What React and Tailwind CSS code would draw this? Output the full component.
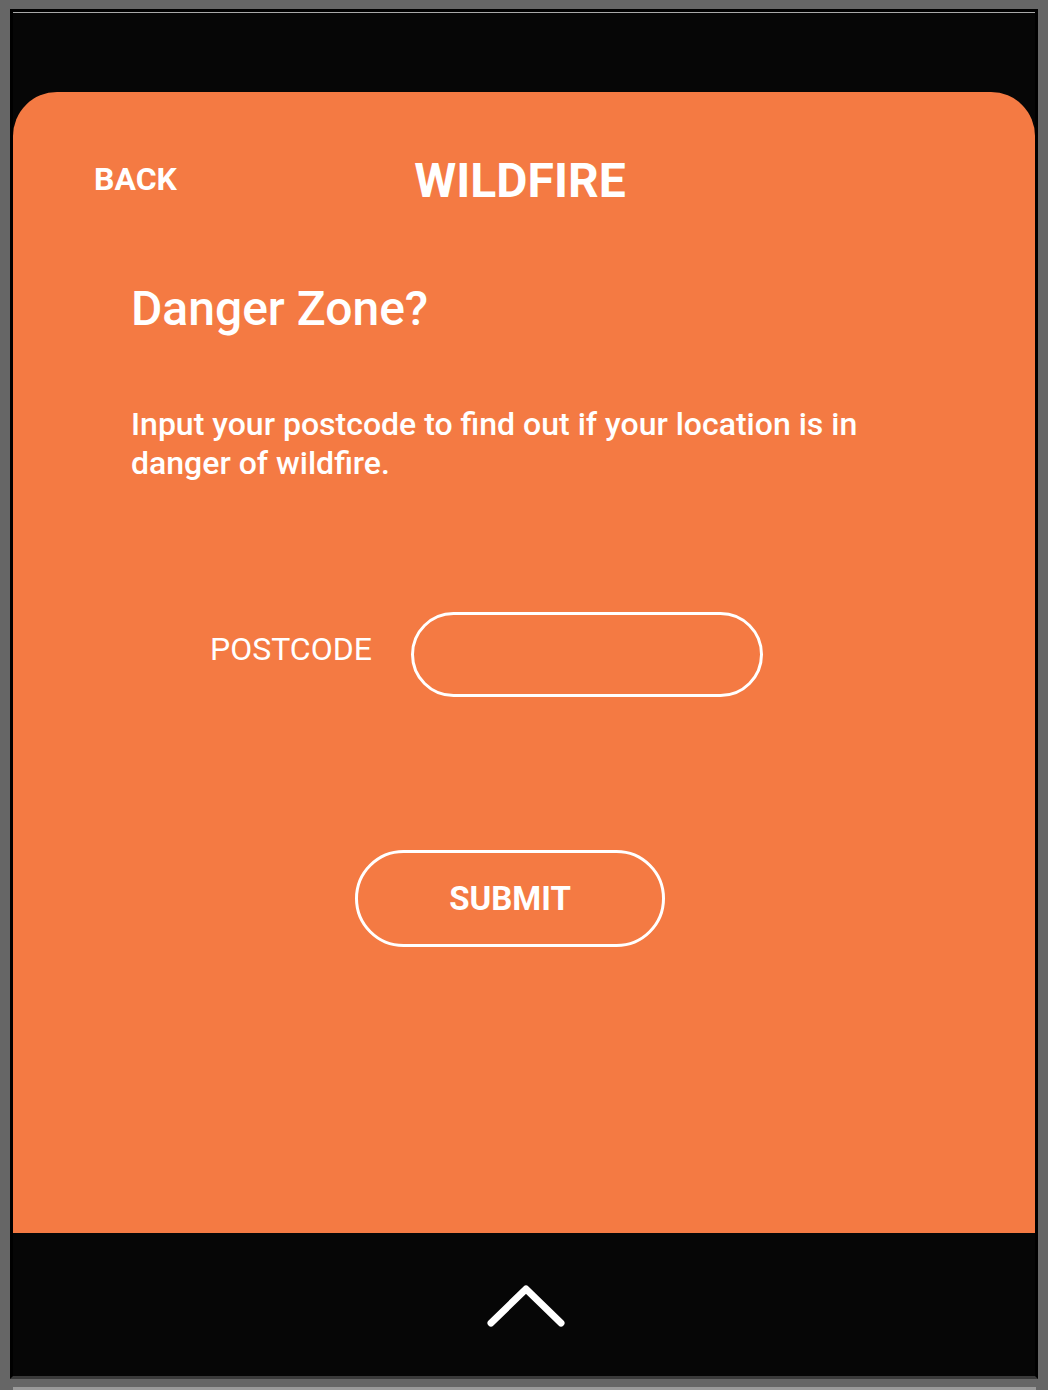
import React, { useState } from 'react';

const ChevronUp = () => (
  <svg width="84" height="50" viewBox="0 0 84 50" fill="none" stroke="white" strokeWidth="7" strokeLinecap="round" strokeLinejoin="round">
    <polyline points="7,42 42,8 77,42" />
  </svg>
);

const App = () => {
  const [postcode, setPostcode] = useState('');

  return (
    <div className="min-h-[1390px] w-[1048px] bg-[#666666] pt-[9px] overflow-hidden" style={{ fontFamily: 'Roboto, "Liberation Sans", sans-serif' }}>
      <div className="ml-[10px] w-[1028px] h-[1370px] border-[3px] border-b-[#3a3a3a] border-black bg-[#060606] flex flex-col">
        <div className="h-px bg-[#a8a8a8]" />
        <div className="h-[79px]" />

        <div className="h-[1141px] bg-[#f47a43] rounded-t-[44px] text-white flex flex-col pt-[67px]">
          <div className="grid grid-cols-[1fr_auto_1fr] items-start">
            <button className="justify-self-start ml-[81px] text-[32px] leading-[40px] font-bold">BACK</button>
            <h1 className="text-[48px] leading-[44px] font-bold -ml-[8px]">WILDFIRE</h1>
            <div />
          </div>

          <div className="pl-[118px]">
            <h2 className="mt-[82px] text-[48px] leading-[48px] font-medium">Danger Zone?</h2>
            <p className="mt-[72px] text-[32px] leading-[39px] font-medium w-[780px]">
              Input your postcode to find out if your location is in danger of wildfire.
            </p>

            <div className="mt-[129px] flex items-start">
              <label htmlFor="postcode" className="ml-[79px] mt-[19px] text-[32px] leading-[36px] font-normal">POSTCODE</label>
              <input
                id="postcode"
                type="text"
                value={postcode}
                onChange={(e) => setPostcode(e.target.value)}
                className="ml-[39px] w-[352px] h-[85px] rounded-full border-[3px] border-white bg-transparent px-8 text-[28px] text-white outline-none"
              />
            </div>
          </div>

          <div className="pl-[342px] mt-[153px]">
            <button className="w-[310px] h-[97px] rounded-full border-[3px] border-white text-[33px] font-bold">SUBMIT</button>
          </div>
        </div>

        <div className="flex-1 flex items-center justify-center">
          <div className="ml-[3px] mt-[2px]">
            <ChevronUp />
          </div>
        </div>
      </div>
      <div className="mt-[8px] ml-[13px] w-[1023px] h-[3px] bg-[#9a9a9a]" />
    </div>
  );
};

export default App;
